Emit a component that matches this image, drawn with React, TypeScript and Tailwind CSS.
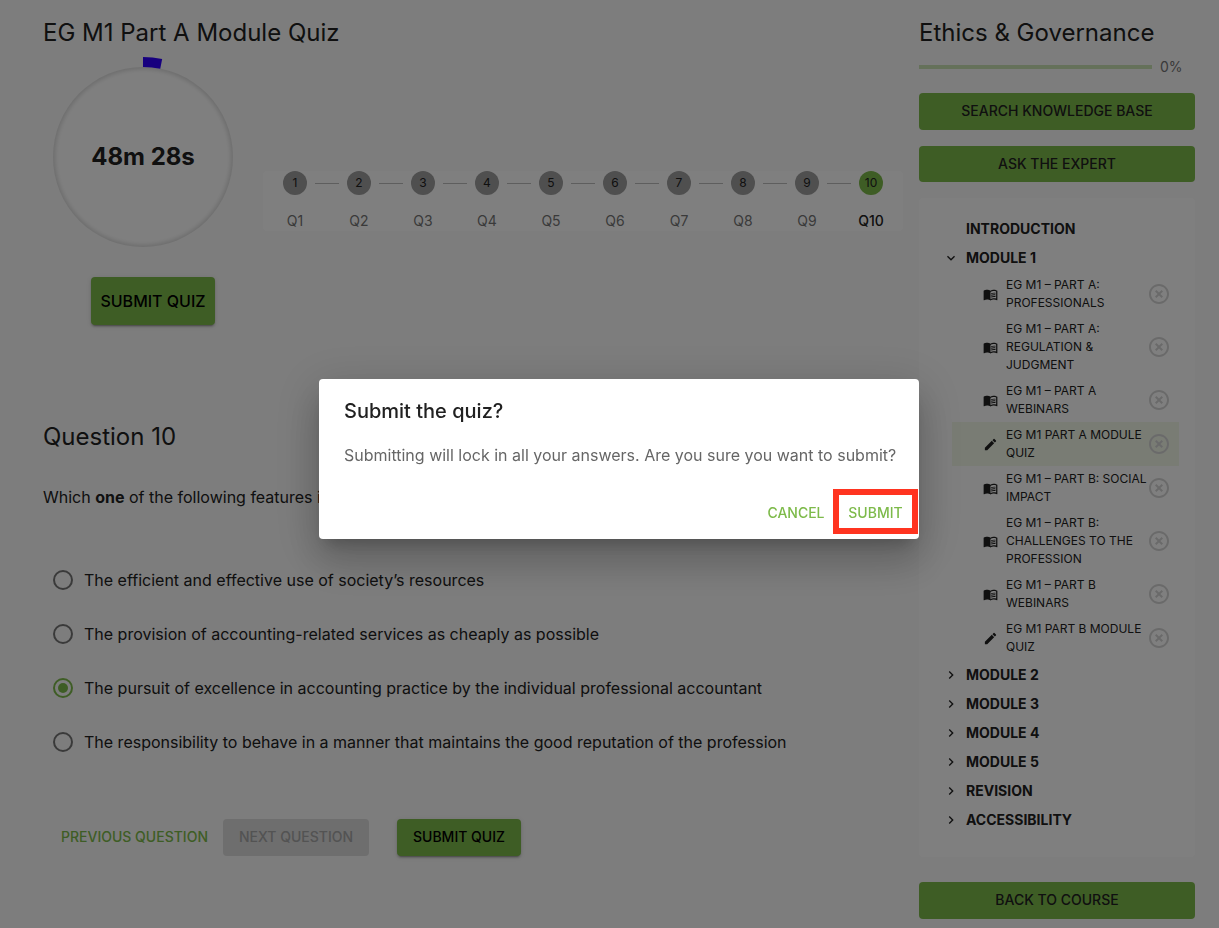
import { useState } from "react";
import { MdMenuBook, MdEdit, MdExpandMore, MdChevronRight, MdHighlightOff } from "react-icons/md";

interface Lesson {
  title: string;
  type: "reading" | "quiz";
  active?: boolean;
}

interface Section {
  title: string;
  open?: boolean;
  leaf?: boolean;
  lessons?: Lesson[];
}

const sections: Section[] = [
  { title: "Introduction", leaf: true },
  {
    title: "Module 1",
    open: true,
    lessons: [
      { title: "EG M1 – Part A: Professionals", type: "reading" },
      { title: "EG M1 – Part A: Regulation & Judgment", type: "reading" },
      { title: "EG M1 – Part A Webinars", type: "reading" },
      { title: "EG M1 Part A Module Quiz", type: "quiz", active: true },
      { title: "EG M1 – Part B: Social Impact", type: "reading" },
      { title: "EG M1 – Part B: Challenges to the Profession", type: "reading" },
      { title: "EG M1 – Part B Webinars", type: "reading" },
      { title: "EG M1 Part B Module Quiz", type: "quiz" },
    ],
  },
  { title: "Module 2" },
  { title: "Module 3" },
  { title: "Module 4" },
  { title: "Module 5" },
  { title: "Revision" },
  { title: "Accessibility" },
];

const answers = [
  "The efficient and effective use of society’s resources",
  "The provision of accounting-related services as cheaply as possible",
  "The pursuit of excellence in accounting practice by the individual professional accountant",
  "The responsibility to behave in a manner that maintains the good reputation of the profession",
];

const steps = [1, 2, 3, 4, 5, 6, 7, 8, 9, 10];

const raised =
  "shadow-[0_3px_1px_-2px_rgba(0,0,0,0.2),0_2px_2px_0_rgba(0,0,0,0.14),0_1px_5px_0_rgba(0,0,0,0.12)]";

function Timer() {
  return (
    <div className="relative flex h-[200px] w-[200px] items-center justify-center">
      <svg className="absolute inset-0" viewBox="0 0 200 200" aria-hidden="true">
        {/* elapsed time */}
        <path d="M100 5 A95 95 0 0 1 118.2 6.8" fill="none" stroke="#2e00ff" strokeWidth="10" />
      </svg>
      <div className="flex h-[180px] w-[180px] items-center justify-center rounded-full bg-white shadow-[inset_0_0_4px_2px_rgba(0,0,0,0.15)]">
        <span className="text-2xl font-bold">48m 28s</span>
      </div>
    </div>
  );
}

function Stepper({ current }: { current: number }) {
  return (
    <ol className="flex flex-1 rounded bg-white">
      {steps.map((step) => (
        <li key={step} className="flex flex-1 flex-col items-center">
          <div className="flex w-full items-center">
            <span className={`h-px flex-1 ${step === 1 ? "" : "bg-[#bdbdbd]"}`} />
            <button
              type="button"
              className={`mx-2 h-6 w-6 rounded-full text-xs ${step === current ? "bg-[#7dba4a]" : "bg-[#9e9e9e]"}`}
            >
              {step}
            </button>
            <span className={`h-px flex-1 ${step === steps.length ? "" : "bg-[#bdbdbd]"}`} />
          </div>
          <span className={`mt-4 text-sm ${step === current ? "font-medium" : "text-[#757575]"}`}>Q{step}</span>
        </li>
      ))}
    </ol>
  );
}

function LessonRow({ lesson }: { lesson: Lesson }) {
  return (
    <li className={`flex items-center py-1 pr-2 pl-[31px] ${lesson.active ? "bg-[#f2f8e9]" : ""}`}>
      {lesson.type === "quiz" ? (
        <MdEdit size={15} className="shrink-0" />
      ) : (
        <MdMenuBook size={15} className="shrink-0" />
      )}
      <a href="#" className="ml-2 flex-1 text-xs leading-[18px] uppercase">
        {lesson.title}
      </a>
      <MdHighlightOff size={24} className="shrink-0 text-[#d5d5d5]" />
    </li>
  );
}

function CourseTree() {
  return (
    <ul className="mt-4 rounded bg-white pt-4 pr-4 pb-[23px] pl-6">
      {sections.map((section) => (
        <li key={section.title}>
          <button type="button" className="flex h-[29px] w-full items-center text-sm font-bold uppercase">
            <span className="w-4">
              {!section.leaf && (section.open ? <MdExpandMore size={16} /> : <MdChevronRight size={16} />)}
            </span>
            <span className="ml-[7px]">{section.title}</span>
          </button>
          {section.lessons && (
            <ul className="ml-[9px]">
              {section.lessons.map((lesson) => (
                <LessonRow key={lesson.title} lesson={lesson} />
              ))}
            </ul>
          )}
        </li>
      ))}
    </ul>
  );
}

function SubmitDialog({ onClose }: { onClose: () => void }) {
  return (
    <div className="fixed inset-0 flex items-start justify-center bg-black/50 pt-[379px] pl-[19px]">
      <div
        role="dialog"
        aria-modal="true"
        aria-labelledby="submit-title"
        className="w-[600px] rounded bg-white shadow-[0_11px_15px_-7px_rgba(0,0,0,0.2),0_24px_38px_3px_rgba(0,0,0,0.14),0_9px_46px_8px_rgba(0,0,0,0.12)]"
      >
        <h2 id="submit-title" className="px-[25px] py-4 text-xl leading-8 font-medium">
          Submit the quiz?
        </h2>
        <p className="pr-4 pb-5 pl-[25px] text-base text-[#666666]">
          Submitting will lock in all your answers. Are you sure you want to submit?
        </p>
        <div className="flex justify-end gap-2 p-2">
          <button type="button" onClick={onClose} className="h-9 w-[72px] text-sm font-medium text-[#7dba4a]">
            CANCEL
          </button>
          <div className="relative">
            <button type="button" onClick={onClose} className="h-9 w-[71px] text-sm font-medium text-[#7dba4a]">
              SUBMIT
            </button>
            <span className="pointer-events-none absolute -inset-x-[7px] -top-[6px] -bottom-[3px] border-6 border-[#ff3420]" />
          </div>
        </div>
      </div>
    </div>
  );
}

export default function App() {
  const [selected, setSelected] = useState(2);
  const [confirming, setConfirming] = useState(true);

  return (
    <div className="min-h-screen bg-[#fafafa] font-['Inter',sans-serif] text-[#212121]">
      <div className="flex gap-4 pt-[17px] pr-6 pb-[9px] pl-[43px]">
        <main className="min-w-0 flex-1">
          <h1 className="text-2xl leading-8">EG M1 Part A Module Quiz</h1>

          <div className="mt-2 flex items-center">
            <div className="flex w-[220px] shrink-0 flex-col pb-5">
              <Timer />
              <button
                type="button"
                onClick={() => setConfirming(true)}
                className={`mt-5 h-12 w-[124px] self-center rounded bg-[#7dba4a] text-base font-medium text-black ${raised}`}
              >
                SUBMIT QUIZ
              </button>
            </div>
            <Stepper current={10} />
          </div>

          <h2 className="mt-[76px] text-2xl leading-8">Question 10</h2>
          <p className="mt-8">
            Which <strong>one</strong> of the following features is a public expectation of the profession?
          </p>

          <div role="radiogroup" className="mt-11 pl-[10px]">
            {answers.map((answer, i) => (
              <label key={answer} className="flex h-[54px] items-center gap-[11px]">
                <input
                  type="radio"
                  name="answer"
                  checked={selected === i}
                  onChange={() => setSelected(i)}
                  className="h-5 w-5 shrink-0 appearance-none rounded-full border-2 border-[#757575] bg-clip-content p-[3px] checked:border-[#7dba4a] checked:bg-[#7dba4a]"
                />
                {answer}
              </label>
            ))}
          </div>

          <div className="mt-[50px] flex items-center pl-[10px] text-sm font-medium">
            <button type="button" className="h-[37px] w-[163px] pb-px text-[#7dba4a]">
              PREVIOUS QUESTION
            </button>
            <button
              type="button"
              disabled
              className="ml-[7px] h-[37px] w-[146px] rounded bg-[#dcdcdc] pb-px text-[#a6a6a6]"
            >
              NEXT QUESTION
            </button>
            <button
              type="button"
              onClick={() => setConfirming(true)}
              className={`ml-7 h-[37px] w-[124px] rounded bg-[#7dba4a] pb-px text-black ${raised}`}
            >
              SUBMIT QUIZ
            </button>
          </div>
        </main>

        <aside className="w-[276px] shrink-0">
          <h2 className="text-2xl leading-8">Ethics &amp; Governance</h2>
          <div className="mt-2 flex items-center">
            <div className="h-1 flex-1 bg-[#cae2b4]" />
            <span className="w-[43px] pl-2 text-sm text-[#757575]">0%</span>
          </div>
          <button type="button" className="mt-4 h-[37px] w-full rounded bg-[#7dba4a] pb-px text-sm font-medium">
            SEARCH KNOWLEDGE BASE
          </button>
          <button type="button" className="mt-4 h-9 w-full rounded bg-[#7dba4a] text-sm font-medium">
            ASK THE EXPERT
          </button>
          <CourseTree />
          <button type="button" className="mt-[25px] h-[37px] w-full rounded bg-[#7dba4a] pb-px text-sm font-medium">
            BACK TO COURSE
          </button>
        </aside>
      </div>

      {confirming && <SubmitDialog onClose={() => setConfirming(false)} />}
    </div>
  );
}
